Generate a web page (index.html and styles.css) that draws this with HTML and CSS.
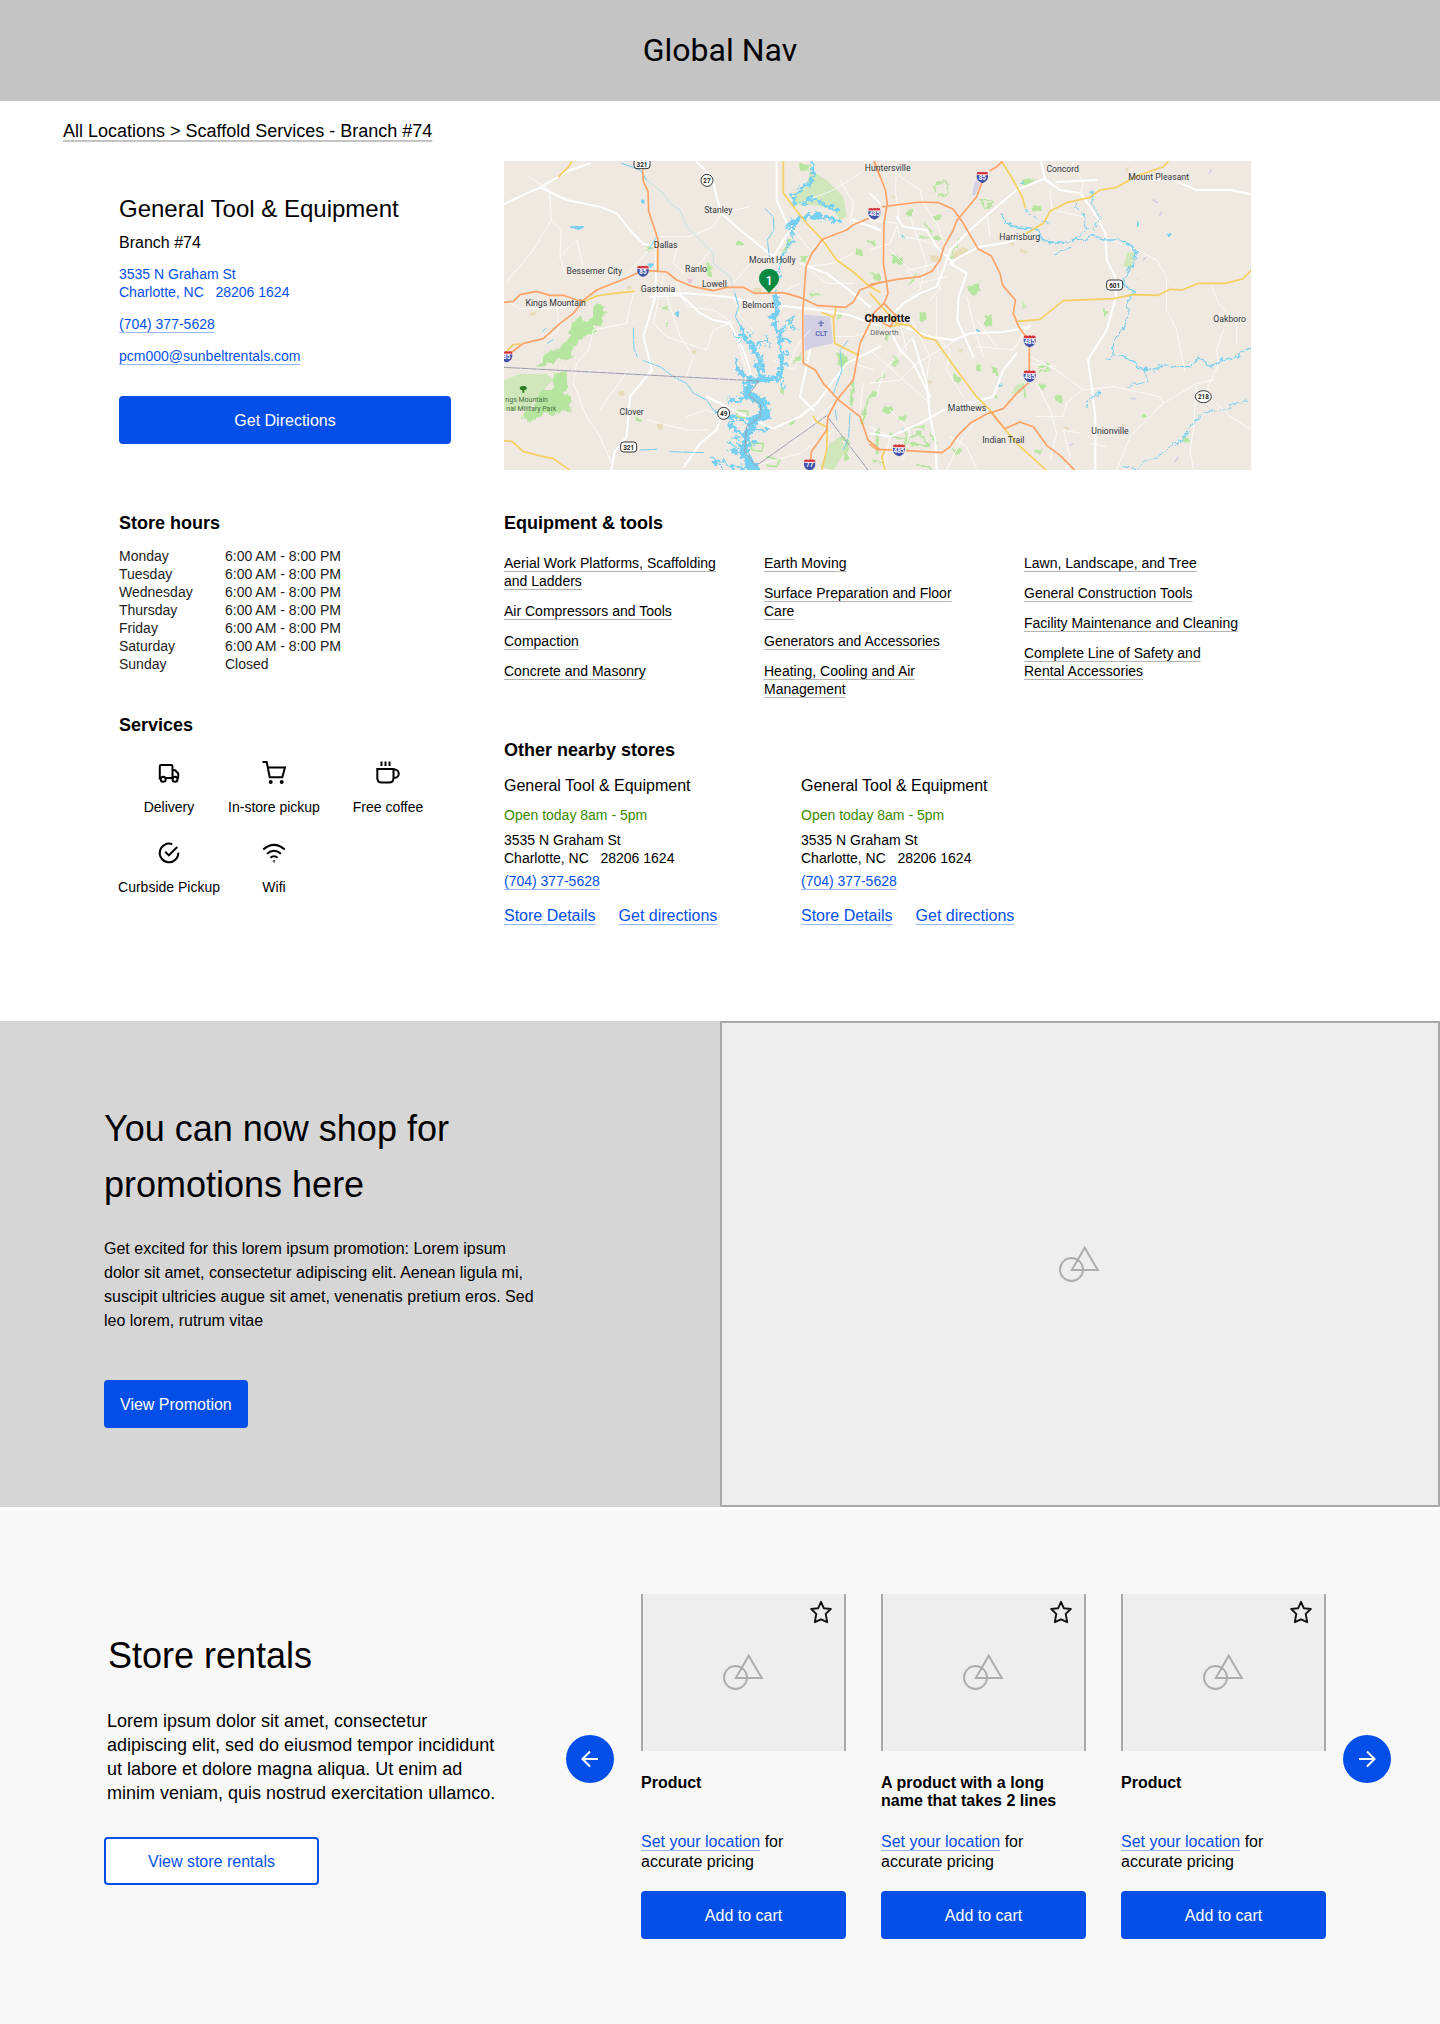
FILE: index.html
```html
<!DOCTYPE html>
<html lang="en">
<head>
<meta charset="utf-8">
<meta name="viewport" content="width=device-width, initial-scale=1">
<title>General Tool &amp; Equipment - Branch #74</title>
<link rel="stylesheet" href="styles.css">
</head>
<body>
<svg class="sprite" aria-hidden="true">
  <symbol id="placeholder" viewBox="0 0 42 38">
    <g fill="none" stroke="#adadad" stroke-width="2"><circle cx="12.5" cy="25.5" r="11.5"/><path d="M25.700 3.800 38.800 26H12.800z"/></g>
  </symbol>
  <symbol id="star" viewBox="0 0 24 24">
    <path d="M12 1.800 14.900 8.300 21.800 9 16.700 13.900 18.200 22.200 12 19.300 5.800 22.200 7.300 13.900 2.200 9 9.100 8.300z" fill="none" stroke="#111" stroke-width="1.900" stroke-linejoin="round"/>
  </symbol>
  <symbol id="interstate" viewBox="0 0 36 36">
    <path d="M1 10H35C37 25 28 32 18 35 8 32-1 25 1 10z" fill="#3f51ab"/>
    <path d="M2 2 5 3 8 1 13 3 18 1 23 3 28 1 31 3 34 2 35 10H1z" fill="#d3353c"/>
    <path d="M1 10H35" stroke="#fff" stroke-width="2"/>
  </symbol>
</svg>

<header class="global-nav">Global Nav</header>

<main class="branch">
  <nav class="breadcrumb" aria-label="Breadcrumb"><a href="#">All Locations &gt; Scaffold Services - Branch #74</a></nav>

  <div class="branch-grid">
    <section class="contact">
      <h1>General Tool &amp; Equipment</h1>
      <p class="branch-number">Branch #74</p>
      <address>3535 N Graham St<br>Charlotte, NC &nbsp; 28206 1624</address>
      <p class="contact-line"><a href="tel:7043775628">(704) 377-5628</a></p>
      <p class="contact-line"><a href="mailto:pcm000@sunbeltrentals.com">pcm000@sunbeltrentals.com</a></p>
      <button class="btn directions" type="button">Get Directions</button>
    </section>

    <div class="map">
      <svg viewBox="0 0 2241 927" preserveAspectRatio="xMidYMid slice" role="img" aria-label="Map of the Charlotte area">
        <defs>
          <filter id="shoreline" x="-10%" y="-10%" width="120%" height="120%">
            <feTurbulence type="fractalNoise" baseFrequency=".075" numOctaves="2" seed="4"/>
            <feDisplacementMap in="SourceGraphic" scale="34" xChannelSelector="R" yChannelSelector="G"/>
          </filter>
          <filter id="woodland" x="-5%" y="-5%" width="110%" height="110%">
            <feTurbulence type="fractalNoise" baseFrequency=".060" numOctaves="2" seed="9"/>
            <feDisplacementMap in="SourceGraphic" scale="22" xChannelSelector="R" yChannelSelector="G"/>
          </filter>
        </defs>
        <rect width="2241" height="927" fill="#efe9e1"/>
        <!-- western half -->
        <g transform="translate(-12 -33)" fill="none" stroke-linejoin="round" stroke-linecap="round">
          <g fill="#b5e59f" filter="url(#woodland)">
            <path d="M276 470 300 458 314 470 312 524 280 525 284 550 252 560 240 578 218 585 214 628 190 630 178 618 160 642 140 640 130 652 110 648 134 620 130 608 155 598 180 600 186 580 204 574 212 528 238 500 262 516 276 500z"/>
            <path d="M160 672 200 660 200 690 206 710 196 730 212 745 214 785 185 780 180 790 150 792 130 785 125 798 84 816 66 800 80 784 100 780 120 720 160 720z"/>
            <path d="M708 276 722 270 732 282 716 288zM620 340 634 344 636 380 622 378zM480 468 504 468 506 480 486 482zM925 430 962 424 966 436 926 440zM900 318 918 318 918 336 902 336zM1070 295 1086 297 1090 318 1070 318zM1104 270 1132 272 1128 286 1106 282zM1010 610 1030 612 1048 636 1030 654 1014 640zM880 634 904 612 908 630 884 638zM408 800 424 804 422 816 406 812zM868 806 892 806 884 822 868 820zM896 40 932 48 918 64 900 56zM1006 500 1028 486 1026 504zM1112 370 1140 368 1140 390 1120 388zM494 520 508 518 504 534zM440 292 456 286 460 298 444 304zM840 708 852 718 850 740z"/>
            <path d="M1084 820 1096 780 1108 740 1126 730M1136 840 1128 910M1054 760 1058 700M1024 860 1044 880 1036 930M850 310 870 270" fill="none" stroke="#b5e59f" stroke-width="9"/>
          </g>
          <g fill="#cfe7bb">
            <path d="M930 60 980 90 1030 140 1040 200 1020 210 1000 180 950 165 890 166 880 130 920 110zM12 690 60 672 140 672 160 690 110 740 90 780 12 782zM990 880 1020 860 1040 900 1000 960 960 950zM860 510 880 504 870 530z"/>
            <path d="M800 920 840 930 830 950 800 946M754 880 790 880 786 904 756 900zM710 782 744 784 742 806 712 800z" fill="none" stroke="#b5e59f" stroke-width="5"/>
          </g>
          <g fill="#e6dcb8">
            <path d="M90 488 112 482 106 496 90 498zM574 604 588 598 590 608 578 614zM356 724 374 722 374 736 358 738zM472 820 490 820 486 840 472 836zM760 416 784 412 784 430 764 430zM382 408 396 408 392 418 382 416zM738 736 750 742 738 752z"/>
          </g>
          <path d="M912 494 990 500 1000 580 934 594 914 604z" fill="#d2d0e2"/>
          <path d="M562 386 578 386 576 400 564 398z" fill="#ecc9d8"/>
          <g stroke="#fff" stroke-width="3" opacity=".8">
            <path d="M86 80 148 120 154 210 184 240 180 320 200 380M154 210 100 300 20 395M180 320 230 270M230 270 250 350M382 372 450 296M14 450 60 476 170 474 250 460M150 560 176 540 172 470M400 430 390 470 380 520 280 540 265 600 230 640 220 700 260 800 300 860 335 940M384 660 300 780M480 260 570 260 640 230 664 190M532 290 520 340 552 370M636 295 590 350M664 190 750 170M700 520 640 480 560 470 530 400M500 440 540 560 580 620 560 680M490 380 460 520 500 560 620 600 640 540 690 520M745 680 720 600 690 520M440 810 560 840 620 840M664 800 620 780 560 800M720 960 900 910 1000 840M760 540 720 500 700 440M900 400 820 440M920 350 1000 340 1060 310M880 240 930 300 1060 220M1060 220 1130 230M900 160 1000 120 1080 70M1060 400 980 400 930 360M870 300 760 330 700 400M820 630 880 660 910 620M1000 560 1060 560 1130 540M1060 640 1120 660M1090 700 1080 780M870 880 960 800 1020 740M930 540 890 590 870 640M1020 90 1060 160 1050 220"/>
          </g>
          <g stroke="#fff" stroke-width="6">
            <path d="M12 162 80 130 120 112 210 60 270 40M120 112 200 150 300 170 350 190 390 240 430 282 458 288M590 36 636 80 650 140 664 190 720 240 820 320M470 300 466 440 430 560 456 660 390 740 380 860 344 905 334 960M470 430 560 430 680 440 780 460 960 480 1050 496 1140 530M450 440 540 436 566 456 600 490 640 510 690 520 730 600 750 660 752 690M664 800 650 840 600 880 552 950M620 740 740 800 820 836 900 800 950 760 1040 640 1140 590M930 600 900 740 940 780M830 36 830 150 870 240 820 320M1060 210 1140 240M900 340 980 370 1060 430 1110 470"/>
          </g>
          <g stroke="#75cff0" stroke-width="3">
            <path d="M365 40 420 60 440 90 490 130 510 160 540 180 560 230 600 270 640 310 640 340 690 380 705 430 716 470 706 500 722 530" stroke="#b4dbe8" stroke-width="2"/>
            <path d="M365 40 420 60 440 90M705 430 716 470 706 500 722 530M795 176 820 200 822 240 802 270 808 320M400 534 402 596 412 620M430 632 480 650 520 680 560 700 580 730 620 750 640 780 700 810M420 900 470 898M510 905 610 908M212 232 250 235M1044 572 1020 600 1026 660 1000 730M1010 810 1006 780M1050 790 1046 860 1030 900M470 260 448 296" stroke-dasharray="34 5"/>
            <path d="M426 150 432 150 432 160 426 158zM444 342 462 342 452 352zM214 230 252 230 236 238zM526 490 536 484 534 500zM142 580 158 570M128 544 138 534" fill="#75cff0"/>
          </g>
          <!-- Lake Wylie and Mountain Island Lake -->
          <g stroke="#75cff0" filter="url(#shoreline)">
            <path d="M936 36 940 90 890 128 878 130 880 158 910 160 930 140 980 166 1010 180" stroke-width="9"/>
            <path d="M1020 212 960 200 920 198 880 216 862 236 M960 200 950 190" stroke-width="13"/>
            <path d="M880 230 876 270 850 310 838 360 830 390" stroke-width="6"/>
            <path d="M824 430 832 470 820 510 838 550 846 640 836 680" stroke-width="13"/>
            <path d="M838 550 862 520 880 500M846 640 860 644M838 680 852 710" stroke-width="6"/>
            <path d="M838 682 790 692 750 690" stroke-width="16"/>
            <path d="M750 690 740 730 790 760 800 790 760 810 740 860 730 900 750 940 770 960" stroke-width="25"/>
            <path d="M790 690 772 650 776 620 760 590M722 530 730 560 756 590 770 610" stroke-width="11"/>
            <path d="M760 590 800 570M744 690 716 660 710 630M740 730 720 750 680 752M740 820 700 800 650 790M730 850 690 830M728 900 690 880M724 910 690 900M770 960 700 950 640 928M760 840 800 840M790 800 806 804M782 660 786 620M850 570 872 574M820 500 808 496M850 610 866 612" stroke-width="8"/>
            <path d="M706 620 714 668M690 742 706 756M700 812 690 826 712 838M684 820 700 842M800 560 806 590M750 600 762 580M874 524 890 540M640 928 670 960M720 870 694 862M756 880 780 876M700 560 724 570M740 560 756 548" stroke-width="5"/>
          </g>
          <path d="M12 652 776 693 746 735 782 765 780 800 740 830 734 905 768 948 980 797 1104 960" stroke="#9c9cae" stroke-width="3" stroke-dasharray="22 4"/>
          <g stroke="#f5cf5f" stroke-width="5">
            <path d="M214 36 206 50 176 80M472 300 474 360M250 456 290 438 340 430 402 424M22 602 40 584 60 582M12 872 36 874 70 905 130 920 160 926 206 958M850 36 850 130 880 170 920 220 966 268 1010 330 1060 366 1110 410 1140 426M966 488 1000 500 1004 580 1074 615M1004 500 1008 470M940 800 950 816 982 832 980 900 966 958"/>
          </g>
          <g stroke="#ffa266" stroke-width="5">
            <path d="M12 457 40 454 60 434 110 424 150 436 190 436 230 450 248 452 290 420 380 384 414 368M448 362 500 366 530 390 580 410 640 422 680 412 730 412 764 430 850 428 900 442 950 466 1036 472 1060 456 1080 420 1140 397M248 456 220 490 180 520 130 566 70 580 36 606M428 60 430 94 444 124 446 184 468 250 474 270 472 366M1104 206 1060 224 1040 240 968 268 936 310 918 350 908 490 910 640 946 660 970 700 1016 750 1080 800 1104 870 1140 900M1140 500 1120 500 1080 580 1060 690 1010 750 984 800 980 840 934 905 932 940M1122 36 1140 80"/>
          </g>
        </g>
        <!-- eastern half -->
        <g transform="translate(1098 -33)" fill="none" stroke-linejoin="round" stroke-linecap="round">
          <g fill="#b5e59f" filter="url(#woodland)">
            <path d="M288 412 310 406 330 394 330 414 316 434 296 424zM60 310 96 322 102 346 86 344 66 336zM186 196 216 196 212 214 194 210zM484 162 516 172 512 184 486 180zM450 94 496 84 490 98 456 104zM344 500 362 486 368 526 352 528 342 516zM148 490 166 486 176 510 150 514zM40 770 60 766 70 780 56 790 42 786zM556 736 580 738 576 758 560 756zM362 646 382 664 382 676 366 670zM320 642 336 654 338 664 322 662zM504 706 528 700 520 724zM370 734 384 738 380 746 370 742zM492 900 520 898 510 908 494 908zM250 676 268 680 266 700 250 694zM68 616 82 622 90 646 70 648zM700 474 716 490 708 500 698 488zM86 800 110 796 104 810 88 812zM246 898 270 894 270 908 250 910zM816 796 830 796 826 804 816 802zM110 186 128 170 126 200 114 200zM940 858 956 864 956 878 940 876zM800 384 806 392 798 390zM42 560 60 556 52 570zM892 410 900 412 896 418z"/>
            <path d="M190 130 200 100 230 96 234 130 210 134M330 150 350 150 376 158 350 172 338 160M506 650 534 646 536 664 510 660M146 262 190 262 220 270M166 220 190 260M270 264 250 300 240 330M430 730 460 705 466 740M90 870 150 850 176 890 120 880M10 930 40 944M140 940 190 960M120 830 160 830M22 690 40 680M120 400 140 380M60 850 90 866M180 850 200 880M110 850 110 905" fill="none" stroke="#b5e59f" stroke-width="6"/>
          </g>
          <g fill="#cfe7bb"><path d="M772 308 798 306 784 356 760 348zM458 452 472 472 456 478zM432 710 452 700 452 730 430 730z"/></g>
          <g fill="#e6dcb8"><path d="M248 308 280 290 296 300 270 326 250 328zM180 316 206 318 208 336 184 334zM450 296 476 304 466 312 448 306zM764 56 778 50 772 70zM582 828 598 832 592 846zM264 600 280 596 274 610zM62 134 76 138 70 148zM408 280 434 274 430 288zM174 690 190 696 176 706zM756 820 764 826 756 832z"/></g>
          <path d="M316 92 330 100 314 138 306 132z" fill="#d2d0e2"/>
          <path d="M850 150 862 158M874 186 870 196M784 746 796 746M598 886 608 882M916 934 924 922M1018 70 1024 60M820 330 826 324" stroke="#d2d0e2" stroke-width="5"/>
          <g stroke="#fff" stroke-width="3" opacity=".8">
            <path d="M60 60 150 120 160 160 200 220 230 300M0 210 80 220 90 260 160 270 200 290M80 40 76 120 90 220M120 200 170 340 150 420 120 440M60 300 120 360 200 340 210 420 180 450M0 300 60 280 80 230M230 380 150 400 110 360M290 440 320 560 340 620M200 440 200 560 240 600 230 660 280 740M90 520 110 600 40 660 20 740M120 500 180 620 170 680M0 600 100 690 180 760M0 700 90 690 140 640 260 570M130 560 60 640M320 590 430 600 480 520M480 620 560 660 640 720 730 710 870 740 880 760 980 700 1030 690M500 800 580 800 590 760 640 716M540 120 546 180 640 200M606 36 640 100 632 130M510 36 530 96 570 120 632 130M710 265 800 300 860 330 890 380 890 480 920 540 944 664M1026 410 1046 460 1100 520 1100 580M1046 640 1010 720M1060 540 1040 600 1046 640M980 700 970 840 960 900 970 960M880 760 780 860 740 960M630 850 580 840 600 920 590 960M500 700 540 780 560 850 540 930M230 960 280 860 330 800M60 780 120 840 100 930M240 860 290 890 320 960M40 960 60 860 0 830M350 190 360 260M480 640 560 650M1040 760 1080 800 1140 836M380 590 320 510M660 880 710 890"/>
          </g>
          <g stroke="#fff" stroke-width="6">
            <path d="M524 86 440 120 380 170 300 240 240 300 220 360 200 410 150 430 100 460 70 490M480 250 420 276 330 290 270 320 240 340 290 370 266 440 262 510 310 620 M524 86 514 36M524 86 570 120 632 130 680 200 706 250 710 330 736 380 738 440 710 540 654 630 664 700 676 800 676 958M680 90 560 96M840 90 900 86 980 120 1080 120 1143 132M480 530 400 546 300 550 250 570 180 560 100 530M130 570 170 700 180 800 196 870 200 958M440 610 400 660 370 740 330 750 220 780 150 820 60 860 0 850M60 540 90 600 130 640 180 740M0 130 30 160M80 200 100 230 170 240 200 290 250 340"/>
          </g>
          <g stroke="#75cff0" stroke-width="4" filter="url(#woodland)">
            <path d="M390 190 410 220 440 234 480 236 500 240 520 270 560 280 600 274 620 262 640 276 670 256 700 270 740 270 770 276 800 304 790 340 770 370 760 400 790 430 770 460 776 490 764 530 740 560 726 590 730 614 780 626 800 650 850 662 880 644 920 650 960 650 990 620 1020 650 1060 630 1100 620 1150 586"/>
            <path d="M614 160 640 200 650 240 620 262M664 120 670 170 690 200 670 240M556 312 606 292M466 180 500 210 540 220M764 710 830 696 826 650M648 776 660 740 690 730M712 628 726 616M756 950 800 956 830 930 860 920 900 890 940 870 960 830 1000 786 1060 780 1090 760 1150 752" stroke-width="3" stroke-dasharray="26 5"/>
            <path d="M806 216 810 228 802 230zM894 252 902 252 896 260zM94 256 106 262M318 540 328 544M388 702 396 706 390 710zM92 838 100 840M452 100 460 98" fill="#75cff0"/>
          </g>
          <g stroke="#f5cf5f" stroke-width="5">
            <path d="M396 36 430 90 456 140 466 172M470 250 520 220 540 184 590 158 660 142 690 120 740 112 800 78 880 50 894 36M446 514 510 508 580 452 730 446 790 434 864 436 900 418 936 420 986 400 1066 400 1120 386 1143 362M0 430 80 520 120 526 160 562 196 570 260 660 320 740 360 780 404 836 440 880 526 958M60 530 100 522M44 900 36 920 44 958"/>
          </g>
          <g stroke="#ffa266" stroke-width="5">
            <path d="M14 36 46 120 52 160 42 220 40 340 50 400 54 430 42 460 0 500M42 460 80 500 60 530 40 520M0 404 80 388 150 380 186 364 210 330 222 290 250 240 260 212 320 140 336 96M360 62 380 50 396 36M38 170 150 156 206 158 250 178 280 220 324 296 364 318 390 370 398 406 436 450 430 490 446 530 468 560M478 592 478 664M474 700 440 730 400 776 350 792 300 820 260 860 240 890 216 908 110 902M66 900 20 898 0 884M360 784 404 836 450 816 490 830 530 886 570 916 612 958"/>
          </g>
        </g>
        <!-- road shields -->
        <g class="shields" transform="translate(-12 -33)">
          <use href="#interstate" x="411" y="346" width="36" height="36"/><text x="429" y="372">85</text>
          <use href="#interstate" x="2" y="602" width="36" height="36"/><text x="20" y="628">85</text>
          <use href="#interstate" x="1102" y="172" width="42" height="38"/><text x="1124" y="199">485</text>
          <use href="#interstate" x="911" y="927" width="36" height="36"/><text x="929" y="952">77</text>
          <use href="#interstate" x="1429" y="64" width="36" height="36"/><text x="1447" y="90">85</text>
          <use href="#interstate" x="1566" y="555" width="46" height="38"/><text x="1589" y="583">485</text>
          <use href="#interstate" x="1566" y="660" width="46" height="38"/><text x="1589" y="688">485</text>
          <use href="#interstate" x="1174" y="882" width="46" height="38"/><text x="1197" y="910">485</text>
          <g fill="#fff" stroke="#333" stroke-width="3">
            <circle cx="621" cy="91" r="18"/><circle cx="671" cy="790" r="18"/><ellipse cx="2110" cy="740" rx="24" ry="18"/>
            <rect x="402" y="28" width="48" height="28" rx="9"/><rect x="362" y="876" width="48" height="30" rx="9"/><rect x="1820" y="390" width="48" height="30" rx="9"/>
          </g>
          <g class="dark"><text x="621" y="98">27</text><text x="671" y="797">49</text><text x="2110" y="747">218</text><text x="426" y="50">321</text><text x="386" y="899">321</text><text x="1844" y="413">601</text></g>
        </g>
        <!-- place names -->
        <g class="places" transform="translate(-12 -33)">
          <text x="655" y="190">Stanley</text><text x="497" y="295">Dallas</text><text x="283" y="371">Bessemer City</text>
          <text x="588" y="367">Ranlo</text><text x="474" y="427">Gastonia</text><text x="643" y="411">Lowell</text>
          <text x="817" y="338">Mount Holly</text><text x="775" y="473">Belmont</text><text x="167" y="468">Kings Mountain</text>
          <text x="395" y="795">Clover</text><text x="1163" y="62">Huntersville</text><text x="1688" y="67">Concord</text>
          <text x="1976" y="91">Mount Pleasant</text><text x="1559" y="270">Harrisburg</text><text x="2189" y="515">Oakboro</text>
          <text x="1401" y="782">Matthews</text><text x="1510" y="879">Indian Trail</text><text x="1830" y="853">Unionville</text>
          <text class="minor" x="1153" y="554">Dilworth</text>
          <text class="city" x="1162" y="515">Charlotte</text>
          <text class="airport" x="964" y="557">CLT</text>
          <g class="park"><text x="80" y="756">ngs Mountain</text><text x="94" y="784">nal Military Park</text></g>
        </g>
        <g transform="translate(-12 -33)">
          <path d="M963 511V528M954 519H972M959 527H967" stroke="#5563b8" stroke-width="3"/>
          <path d="M70 708C60 706 56 716 63 720H67V728H73V720H77C84 716 80 706 70 708z" fill="#2c7d22"/>
          <path d="M807 430C792 412 777 402 777 386A30 30 0 0 1 837 386C837 402 822 412 807 430z" fill="#0a8a45"/>
          <text class="pin-number" x="807" y="405">1</text>
        </g>
      </svg>
    </div>

    <div class="store-info">
      <section>
        <h2>Store hours</h2>
        <table class="hours">
          <tr><th scope="row">Monday</th><td>6:00 AM - 8:00 PM</td></tr>
          <tr><th scope="row">Tuesday</th><td>6:00 AM - 8:00 PM</td></tr>
          <tr><th scope="row">Wednesday</th><td>6:00 AM - 8:00 PM</td></tr>
          <tr><th scope="row">Thursday</th><td>6:00 AM - 8:00 PM</td></tr>
          <tr><th scope="row">Friday</th><td>6:00 AM - 8:00 PM</td></tr>
          <tr><th scope="row">Saturday</th><td>6:00 AM - 8:00 PM</td></tr>
          <tr><th scope="row">Sunday</th><td>Closed</td></tr>
        </table>
      </section>
      <section>
        <h2>Services</h2>
        <ul class="services">
          <li><svg viewBox="0 0 24 24"><path d="M2.800 18.500V5.200Q2.800 3.900 4.100 3.900H14.200Q15.500 3.900 15.500 5.200V17H8.300M15.500 9.300H18.300L21.200 12.500V16.500Q21.200 17.300 20.300 17.300M2.800 15.500V17.200H4.200M15.500 16.800H16.200"/><circle cx="6.200" cy="18.200" r="2.500"/><circle cx="18" cy="18.200" r="2.500"/></svg>Delivery</li>
          <li><svg viewBox="0 0 24 24"><path d="M.500 1H4.700L7.700 16.300H20.300L23 6.500H5.900"/><circle class="dot" cx="8.700" cy="21" r="1"/><circle class="dot" cx="19.700" cy="21" r="1"/></svg>In-store pickup</li>
          <li><svg viewBox="0 0 24 24"><path d="M5.500.500V5M9.500.500V5M13.500.500V5M1.300 8H17.500V17Q17.500 21.500 13 21.500H5.800Q1.300 21.500 1.300 17zM17.500 8.500H18.600A4 4 0 0 1 18.600 16.800H17.500"/></svg>Free coffee</li>
          <li><svg viewBox="0 0 24 24"><path d="M15.200 3.200A9.300 9.300 0 1 0 21.300 11.600M8.300 10.800 11.800 14.400 20.200 6"/></svg>Curbside Pickup</li>
          <li><svg viewBox="0 0 24 24"><path d="M1.200 8.600Q12-.800 22.800 8.600M5 12.700Q12 6.700 19 12.700M8.400 16.700Q12 13.700 15.600 16.700"/><circle class="dot" cx="12" cy="20.300" r=".300"/></svg>Wifi</li>
        </ul>
      </section>
    </div>

    <div class="store-links">
      <section>
        <h2>Equipment &amp; tools</h2>
        <div class="equipment">
          <ul>
            <li><a href="#">Aerial Work Platforms, Scaffolding and Ladders</a></li>
            <li><a href="#">Air Compressors and Tools</a></li>
            <li><a href="#">Compaction</a></li>
            <li><a href="#">Concrete and Masonry</a></li>
          </ul>
          <ul>
            <li><a href="#">Earth Moving</a></li>
            <li><a href="#">Surface Preparation and Floor Care</a></li>
            <li><a href="#">Generators and Accessories</a></li>
            <li><a href="#">Heating, Cooling and Air Management</a></li>
          </ul>
          <ul>
            <li><a href="#">Lawn, Landscape, and Tree</a></li>
            <li><a href="#">General Construction Tools</a></li>
            <li><a href="#">Facility Maintenance and Cleaning</a></li>
            <li><a href="#">Complete Line of Safety and Rental Accessories</a></li>
          </ul>
        </div>
      </section>
      <section>
        <h2>Other nearby stores</h2>
        <div class="nearby">
          <article>
            <h3>General Tool &amp; Equipment</h3>
            <p class="open">Open today 8am - 5pm</p>
            <p>3535 N Graham St<br>Charlotte, NC &nbsp; 28206 1624</p>
            <p class="phone"><a href="tel:7043775628">(704) 377-5628</a></p>
            <p class="actions"><a href="#">Store Details</a><a href="#">Get directions</a></p>
          </article>
          <article>
            <h3>General Tool &amp; Equipment</h3>
            <p class="open">Open today 8am - 5pm</p>
            <p>3535 N Graham St<br>Charlotte, NC &nbsp; 28206 1624</p>
            <p class="phone"><a href="tel:7043775628">(704) 377-5628</a></p>
            <p class="actions"><a href="#">Store Details</a><a href="#">Get directions</a></p>
          </article>
        </div>
      </section>
    </div>
  </div>
</main>

<section class="promo">
  <div class="promo-text">
    <h2>You can now shop for promotions here</h2>
    <p>Get excited for this lorem ipsum promotion: Lorem ipsum dolor sit amet, consectetur adipiscing elit. Aenean ligula mi, suscipit ultricies augue sit amet, venenatis pretium eros. Sed leo lorem, rutrum vitae</p>
    <button class="btn" type="button">View Promotion</button>
  </div>
  <div class="promo-image"><svg class="placeholder" aria-hidden="true"><use href="#placeholder"/></svg></div>
</section>

<section class="rentals">
  <div class="rentals-text">
    <h2>Store rentals</h2>
    <p>Lorem ipsum dolor sit amet, consectetur adipiscing elit, sed do eiusmod tempor incididunt ut labore et dolore magna aliqua. Ut enim ad minim veniam, quis nostrud exercitation ullamco.</p>
    <button class="btn outline" type="button">View store rentals</button>
  </div>
  <div class="carousel">
    <button class="arrow" type="button" aria-label="Previous products"><svg viewBox="0 0 24 24"><path d="M20 12H4.500M12 4.500 4.500 12 12 19.500"/></svg></button>
    <div class="products">
      <article class="product">
        <div class="product-image"><svg class="placeholder" aria-hidden="true"><use href="#placeholder"/></svg><button class="favorite" type="button" aria-label="Save product"><svg aria-hidden="true"><use href="#star"/></svg></button></div>
        <h3>Product</h3>
        <p><a href="#">Set your location</a> for<br>accurate pricing</p>
        <button class="btn" type="button">Add to cart</button>
      </article>
      <article class="product">
        <div class="product-image"><svg class="placeholder" aria-hidden="true"><use href="#placeholder"/></svg><button class="favorite" type="button" aria-label="Save product"><svg aria-hidden="true"><use href="#star"/></svg></button></div>
        <h3>A product with a long name that takes 2 lines</h3>
        <p><a href="#">Set your location</a> for<br>accurate pricing</p>
        <button class="btn" type="button">Add to cart</button>
      </article>
      <article class="product">
        <div class="product-image"><svg class="placeholder" aria-hidden="true"><use href="#placeholder"/></svg><button class="favorite" type="button" aria-label="Save product"><svg aria-hidden="true"><use href="#star"/></svg></button></div>
        <h3>Product</h3>
        <p><a href="#">Set your location</a> for<br>accurate pricing</p>
        <button class="btn" type="button">Add to cart</button>
      </article>
    </div>
    <button class="arrow" type="button" aria-label="Next products"><svg viewBox="0 0 24 24"><path d="M4 12H19.500M12 4.500 19.500 12 12 19.500"/></svg></button>
  </div>
</section>
</body>
</html>
```
FILE: styles.css
```css
* { box-sizing: border-box; }

body {
  margin: 0;
  background: #fff;
  color: #000;
  font: 14px/18px "Liberation Sans", Arial, sans-serif;
}

h1, h2, h3, p, ul { margin: 0; padding: 0; }
ul { list-style: none; }
address { font-style: normal; }

a {
  color: #054fe9;
  text-decoration: underline 1px #9bb9f7;
  text-underline-offset: 3px;
  text-decoration-skip-ink: none;
}

h2 { font-size: 18px; line-height: 24px; }

.sprite { display: none; }

.btn {
  display: block;
  height: 48px;
  padding: 2px 16px 0;
  border: 0;
  border-radius: 4px;
  background: #054fe9;
  color: #fff;
  font: 16px/20px "Liberation Sans", Arial, sans-serif;
}

/* Header */
.global-nav {
  padding: 32px 0;
  background: #c4c4c4;
  font: 32px/37px Roboto, sans-serif;
  text-align: center;
}

.breadcrumb {
  padding: 18px 63px;
  font-size: 18px;
  line-height: 24px;
}
.breadcrumb a {
  color: #000;
  text-decoration: underline 2px #c4c4c4;
}

/* Branch details */
.branch { padding-bottom: 95px; }
.branch-grid {
  display: grid;
  grid-template-columns: 332px minmax(0, 747px);
  gap: 41px 53px;
  padding: 0 24px 0 119px;
}

.contact { padding-top: 32px; }
.contact h1 {
  font-size: 24px;
  line-height: 32px;
  font-weight: 400;
}
.branch-number {
  margin: 8px 0 12px;
  font-size: 16px;
  line-height: 20px;
}
.contact address { color: #054fe9; }
.contact-line { margin-top: 14px; }
.directions {
  width: 100%;
  margin-top: 31px;
}

.map svg {
  display: block;
  width: 100%;
  height: auto;
}
.map text {
  font-family: Roboto, sans-serif;
  text-anchor: middle;
}
.places {
  font-size: 26px;
  fill: #33373c;
}
.places .minor { font-size: 23px; fill: #666; }
.places .city { font-size: 33px; font-weight: 700; fill: #111; }
.places .airport { font-size: 22px; font-weight: 500; fill: #5563b8; }
.places .park { font-size: 21px; fill: #48703c; }
.shields {
  font-size: 19px;
  font-weight: 700;
  fill: #fff;
}
.shields .dark { fill: #222; }
.pin-number {
  font-size: 38px;
  font-weight: 500;
  fill: #fff;
}

.store-info,
.store-links {
  display: flex;
  flex-direction: column;
  gap: 40px;
}

.hours {
  margin-top: 12px;
  border-collapse: collapse;
  color: #222;
}
.hours th {
  width: 106px;
  padding: 0;
  font-weight: 400;
  text-align: left;
}
.hours td { padding: 0; }

.services {
  display: grid;
  grid-template-columns: 100px 110px 118px;
  row-gap: 25px;
  margin-top: 24px;
}
.services li {
  display: flex;
  flex-direction: column;
  align-items: center;
  gap: 13px;
  white-space: nowrap;
}
.services svg {
  width: 24px;
  height: 24px;
  overflow: visible;
  fill: none;
  stroke: #000;
  stroke-width: 2;
}
.services .dot { fill: #000; }

.equipment {
  display: grid;
  grid-template-columns: repeat(3, minmax(0, 216px));
  gap: 44px;
  margin-top: 19px;
}
.equipment ul {
  display: flex;
  flex-direction: column;
  gap: 12px;
}
.equipment a {
  color: #000;
  text-decoration-color: #b4b4b4;
}

.nearby {
  display: grid;
  grid-template-columns: repeat(2, minmax(0, 277px));
  gap: 20px;
  margin-top: 14px;
}
.nearby h3 {
  font-size: 16px;
  line-height: 20px;
  font-weight: 400;
}
.nearby .open {
  margin: 10px 0 7px;
  color: #3a8a00;
}
.nearby .phone { margin-top: 5px; }
.nearby .actions {
  display: flex;
  gap: 23px;
  margin-top: 16px;
  font-size: 16px;
  line-height: 20px;
}

/* Promotion */
.promo {
  display: grid;
  grid-template-columns: 1fr 1fr;
  margin-bottom: 3px;
}
.promo-text {
  padding: 80px 104px 79px;
  background: #d6d6d6;
}
.promo h2,
.rentals h2 {
  font-size: 36px;
  line-height: 56px;
  font-weight: 400;
}
.promo p {
  max-width: 438px;
  margin: 24px 0 47px;
  font-size: 16px;
  line-height: 24px;
}
.promo-image {
  display: flex;
  align-items: center;
  justify-content: center;
  padding-bottom: 2px;
  border: 2px solid #a9a9a9;
  background: #eee;
}
.placeholder {
  width: 42px;
  height: 38px;
}

/* Rentals */
.rentals {
  display: grid;
  grid-template-columns: minmax(0, 1fr) 825px;
  padding: 84px 49px 85px 104px;
  background: #f8f8f8;
}
.rentals-text { padding-top: 34px; }
.rentals h2 { padding-left: 4px; }
.rentals-text p {
  max-width: 403px;
  margin: 25px 0 32px;
  padding-left: 3px;
  font-size: 18px;
  line-height: 24px;
}
.outline {
  width: 215px;
  border: 2px solid #054fe9;
  background: #fff;
  color: #054fe9;
}

.carousel {
  display: grid;
  grid-template-columns: 48px minmax(0, 1fr) 48px;
  column-gap: 17px;
}
.arrow {
  display: flex;
  align-items: center;
  justify-content: center;
  width: 48px;
  height: 48px;
  margin-top: 141px;
  padding: 0;
  border: 0;
  border-radius: 50%;
  background: #054fe9;
}
.arrow svg {
  width: 24px;
  height: 24px;
  fill: none;
  stroke: #fff;
  stroke-width: 2;
}
.products {
  display: grid;
  grid-template-columns: repeat(3, minmax(0, 1fr));
  gap: 35px;
  padding-left: 10px;
}
.product-image {
  position: relative;
  display: flex;
  align-items: center;
  justify-content: center;
  height: 157px;
  padding-bottom: 4px;
  border: solid #a9a9a9;
  border-width: 0 2px;
  background: #eee;
}
.favorite {
  position: absolute;
  top: 6px;
  right: 11px;
  width: 24px;
  height: 24px;
  padding: 0;
  border: 0;
  background: none;
}
.favorite svg {
  display: block;
  width: 24px;
  height: 24px;
}
.product h3 {
  min-height: 36px;
  margin: 23px 0 22px;
  font-size: 16px;
  line-height: 18px;
}
.product p {
  margin-bottom: 19px;
  font-size: 16px;
  line-height: 20px;
}
.product .btn { width: 100%; }
```
